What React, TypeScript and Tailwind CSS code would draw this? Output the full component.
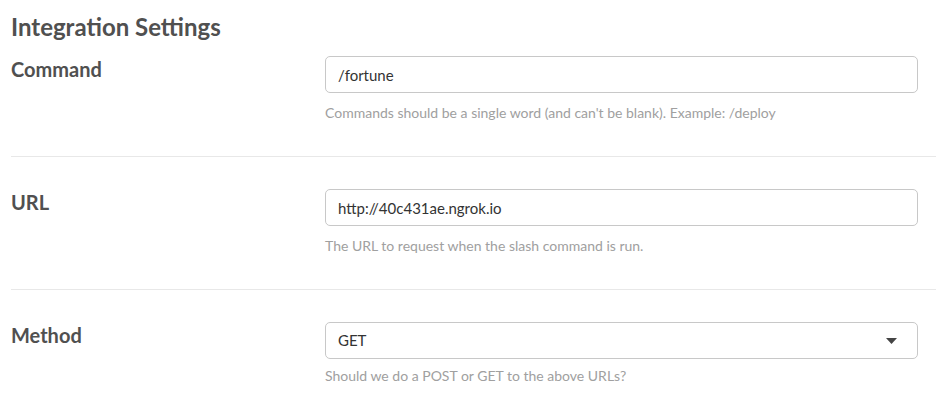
export default function App() {
  return (
    <div className="min-h-screen bg-white px-[11px] font-['Lato','Open_Sans',sans-serif] text-[#505050]">
      <h2 className="pt-[12px] text-[24px] font-bold leading-[30px]">Integration Settings</h2>

      <div className="mt-[14px] w-[925px]">
        {/* Command */}
        <div className="flex border-b border-[#e8e8e8] pb-[34px]">
          <label className="w-[314px] pt-[1px] text-[20px] font-bold leading-[24px]">Command</label>
          <div className="w-[593px]">
            <input
              defaultValue="/fortune"
              className="h-[37px] w-full rounded-[5px] border border-[#c8c8c8] px-3 text-[15px] text-[#333] outline-none"
            />
            <p className="mt-[11px] text-[14px] leading-[18px] text-[#a0a0a0]">
              Commands should be a single word (and can't be blank). Example: /deploy
            </p>
          </div>
        </div>

        {/* URL */}
        <div className="flex border-b border-[#e8e8e8] pt-[32px] pb-[34px]">
          <label className="w-[314px] pt-[1px] text-[20px] font-bold leading-[24px]">URL</label>
          <div className="w-[593px]">
            <input
              defaultValue="http://40c431ae.ngrok.io"
              className="h-[37px] w-full rounded-[5px] border border-[#c8c8c8] px-3 text-[15px] text-[#333] outline-none"
            />
            <p className="mt-[11px] text-[14px] leading-[18px] text-[#a0a0a0]">
              The URL to request when the slash command is run.
            </p>
          </div>
        </div>

        {/* Method */}
        <div className="flex pt-[32px]">
          <label className="w-[314px] pt-[1px] text-[20px] font-bold leading-[24px]">Method</label>
          <div className="w-[593px]">
            <div className="flex h-[37px] w-full items-center justify-between rounded-[5px] border border-[#c8c8c8] px-3 text-[15px] text-[#333]">
              <span>GET</span>
              <svg width="11" height="6" viewBox="0 0 11 6" className="mr-[8px]">
                <path d="M0 0h11L5.5 6z" fill="#444" />
              </svg>
            </div>
            <p className="mt-[8px] text-[14px] leading-[18px] text-[#a0a0a0]">
              Should we do a POST or GET to the above URLs?
            </p>
          </div>
        </div>
      </div>
    </div>
  );
}
